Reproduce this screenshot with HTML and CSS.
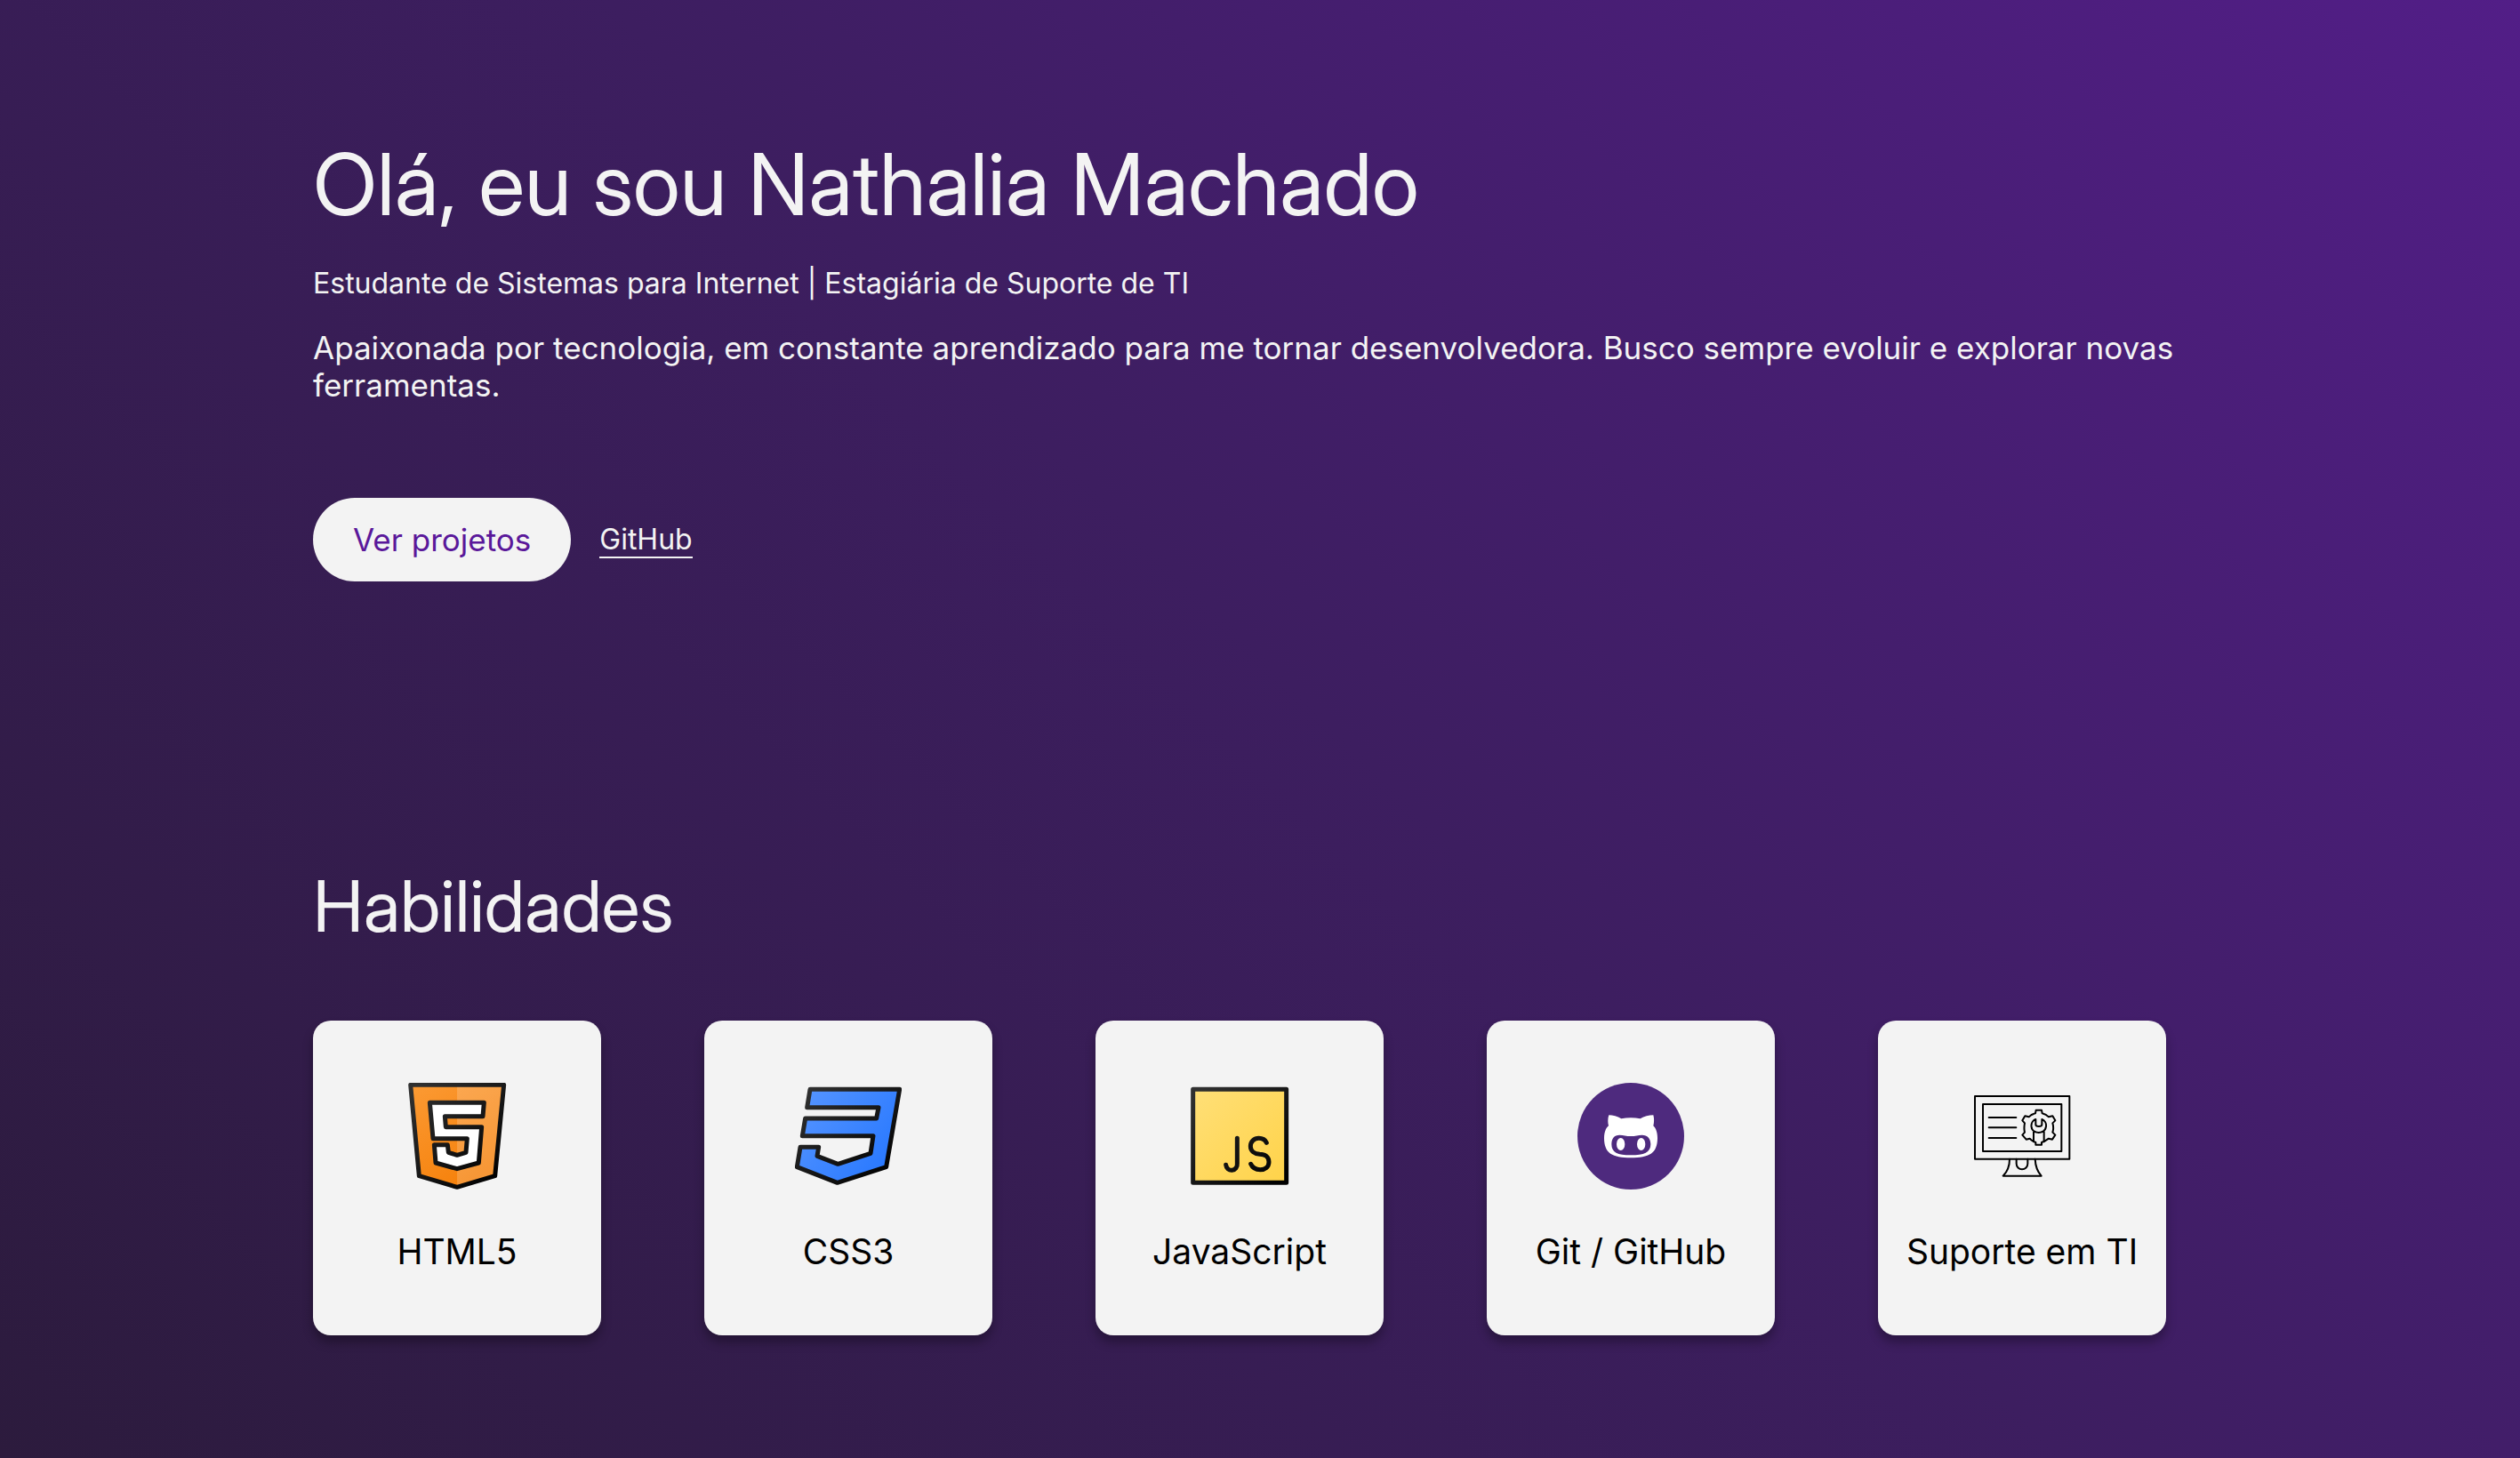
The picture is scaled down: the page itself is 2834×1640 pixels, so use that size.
FILE: index.html
```html
<!DOCTYPE html>
<html lang="pt-BR">
<head>
  <meta charset="UTF-8">
  <meta name="viewport" content="width=device-width, initial-scale=1">
  <title>Nathalia Machado</title>
  <link rel="stylesheet" href="styles.css">
</head>
<body>
  <header class="hero">
    <h1 class="hero-title">Olá, eu sou Nathalia Machado</h1>
    <p class="hero-role">Estudante de Sistemas para Internet | Estagiária de Suporte de TI</p>
    <p class="hero-text">Apaixonada por tecnologia, em constante aprendizado para me tornar desenvolvedora. Busco sempre evoluir e explorar novas ferramentas.</p>
    <nav class="hero-actions">
      <a class="button" href="#projetos">Ver projetos</a>
      <a class="link" href="#github">GitHub</a>
    </nav>
  </header>

  <main class="skills">
    <h2 class="skills-title">Habilidades</h2>
    <ul class="cards">
      <li class="card">
        <svg class="icon" viewBox="0 0 360 360" aria-hidden="true">
          <defs>
            <linearGradient id="ink" gradientUnits="userSpaceOnUse" x1="40" y1="20" x2="320" y2="320"><stop offset="0" stop-color="#303030"/><stop offset="1" stop-color="#000"/></linearGradient>
            <linearGradient id="orange" gradientUnits="userSpaceOnUse" x1="40" y1="20" x2="260" y2="340"><stop offset="0" stop-color="#fb9932"/><stop offset="1" stop-color="#f57f08"/></linearGradient>
          </defs>
          <path d="M23 7H338L308 314L180 352L52 314Z" fill="url(#orange)"/>
          <path d="M180 7H338L308 314L180 352Z" fill="#fff" fill-opacity=".18"/>
          <path d="M23 7H338L308 314L180 352L52 314Z" class="outline"/>
          <path d="M88 67H271L267 113H139L142 149H263L253 270L180 290L108 270L103 209H148L151 235L180 244L210 235L214 188H99Z" class="outline fill-white"/>
        </svg>
        <h3 class="card-name">HTML5</h3>
      </li>
      <li class="card">
        <svg class="icon" viewBox="0 0 360 360" aria-hidden="true">
          <defs>
            <linearGradient id="blue" gradientUnits="userSpaceOnUse" x1="40" y1="40" x2="320" y2="240"><stop offset="0" stop-color="#5393ff"/><stop offset="1" stop-color="#2b7aff"/></linearGradient>
          </defs>
          <path d="M51 22H353L308 284L143 337L7 284L18 217H80L75 247L145 274L255 238L264 179H25L35 120H275L282 83H41Z" class="outline fill-blue"/>
        </svg>
        <h3 class="card-name">CSS3</h3>
      </li>
      <li class="card">
        <svg class="icon" viewBox="0 0 360 360" aria-hidden="true">
          <defs>
            <linearGradient id="yellow" gradientUnits="userSpaceOnUse" x1="30" y1="30" x2="330" y2="330"><stop offset="0" stop-color="#ffdf76"/><stop offset="1" stop-color="#ffd34a"/></linearGradient>
          </defs>
          <rect x="23" y="22" width="315" height="315" class="outline fill-yellow"/>
          <path d="M172 187V273a19 20 0 0 1-38 4M271 202C266 192 257 187 245 187C229 187 217 198 217 214C217 231 231 240 248 241C266 241 279 250 279 267C279 284 266 293 250 293C235 293 223 286 218 274" class="outline"/>
        </svg>
        <h3 class="card-name">JavaScript</h3>
      </li>
      <li class="card">
        <svg class="icon" viewBox="0 0 360 360" aria-hidden="true">
          <circle cx="180" cy="180" r="180" fill="#4e2a7e"/>
          <path fill="#fff" d="M106 109C102 120 102 133 105 145C94 155 90 169 90 187C90 238 118 253 180 253C242 253 270 238 270 187C270 169 266 155 256 145C259 133 259 120 256 109C241 109 225 113 212 121C192 117 168 117 148 121C135 113 119 109 106 109Z"/>
          <path fill="#4e2a7e" d="M180 180C165 180 155 176 142 176C124 176 115 188 115 207C115 235 135 244 180 244C225 244 247 235 247 207C247 188 236 176 218 176C205 176 195 180 180 180Z"/>
          <ellipse cx="146" cy="207" rx="14" ry="21" fill="#fff"/>
          <ellipse cx="215" cy="207" rx="14" ry="21" fill="#fff"/>
        </svg>
        <h3 class="card-name">Git / GitHub</h3>
      </li>
      <li class="card">
        <svg class="icon" viewBox="0 0 360 360" aria-hidden="true">
          <g class="thin">
            <rect x="21" y="45" width="319" height="212"/>
            <rect x="48" y="72" width="265" height="159"/>
            <path d="M68 117H160M68 151H160M68 186H160"/>
            <path d="M138 257C138 280 130 300 116 314H245C232 300 225 280 224 257M161 257V273a19 19 0 0 0 38 0V257"/>
            <path d="M219 198C214 196 210 193 206 188L194 191L181 176L189 167C187 158 187 146 189 136L181 127L190 112L203 115C209 109 216 105 225 103L227 92H246L248 103C256 105 264 109 270 115L283 112L292 127L283 136C286 146 286 158 283 167L292 176L282 191L270 188C264 192 258 196 254 198"/>
            <path d="M226 123C206 130 204 166 236 168C268 166 267 130 247 123V141C247 149 226 149 226 141ZM219 165V198L226 201V209H246V201L254 198V165"/>
          </g>
        </svg>
        <h3 class="card-name">Suporte em TI</h3>
      </li>
    </ul>
  </main>
</body>
</html>
```
FILE: styles.css
```css
* {
  box-sizing: border-box;
  margin: 0;
  padding: 0;
}

body {
  min-height: 100vh;
  padding: 149px 352px 138px;
  background: linear-gradient(45deg, #2c1b3d, #3d1e60 52%, #521e87);
  color: #f3f3f3;
  font-family: Inter, "Liberation Sans", sans-serif;
  font-size: 32px;
}

h1,
h2,
h3 {
  font-weight: 400;
}

h1,
h2 {
  font-family: "Inter Display", Inter, "Liberation Sans", sans-serif;
}

.hero-title {
  margin-bottom: 34px;
  font-size: 96px;
  line-height: 116px;
}

.hero-role {
  margin-bottom: 32px;
  line-height: 39px;
}

.hero-text {
  margin-bottom: 106px;
  font-size: 35px;
  line-height: 42px;
}

.hero-actions {
  display: flex;
  align-items: center;
  gap: 32px;
}

.button {
  padding: 25px 45px;
  border-radius: 48px;
  background: #f3f3f3;
  color: #5a189a;
  font-size: 35px;
  line-height: 44px;
  text-decoration: none;
}

.link {
  border-bottom: 2px solid #f3f3f3;
  color: inherit;
  line-height: 39px;
  text-decoration: none;
}

.skills {
  padding-top: 316px;
}

.skills-title {
  margin-bottom: 81px;
  font-size: 80px;
  line-height: 97px;
}

.cards {
  display: flex;
  flex-wrap: wrap;
  gap: 64px 116px;
  list-style: none;
}

.card {
  display: flex;
  flex-direction: column;
  align-items: center;
  gap: 45px;
  width: 324px;
  padding: 70px 0 69px;
  border-radius: 20px;
  background: #f3f3f3;
  box-shadow: 0 8px 12px rgba(0, 0, 0, 0.3);
  color: #000;
}

.icon {
  width: 120px;
  height: 120px;
}

.card-name {
  font-size: 39px;
  line-height: 50px;
}

.outline {
  fill: none;
  stroke: url(#ink);
  stroke-width: 15;
  stroke-linecap: round;
  stroke-linejoin: round;
}

.fill-white {
  fill: #fff;
}

.fill-blue {
  fill: url(#blue);
}

.fill-yellow {
  fill: url(#yellow);
}

.thin {
  fill: none;
  stroke: #000;
  stroke-width: 6;
  stroke-linecap: round;
  stroke-linejoin: round;
}
```
